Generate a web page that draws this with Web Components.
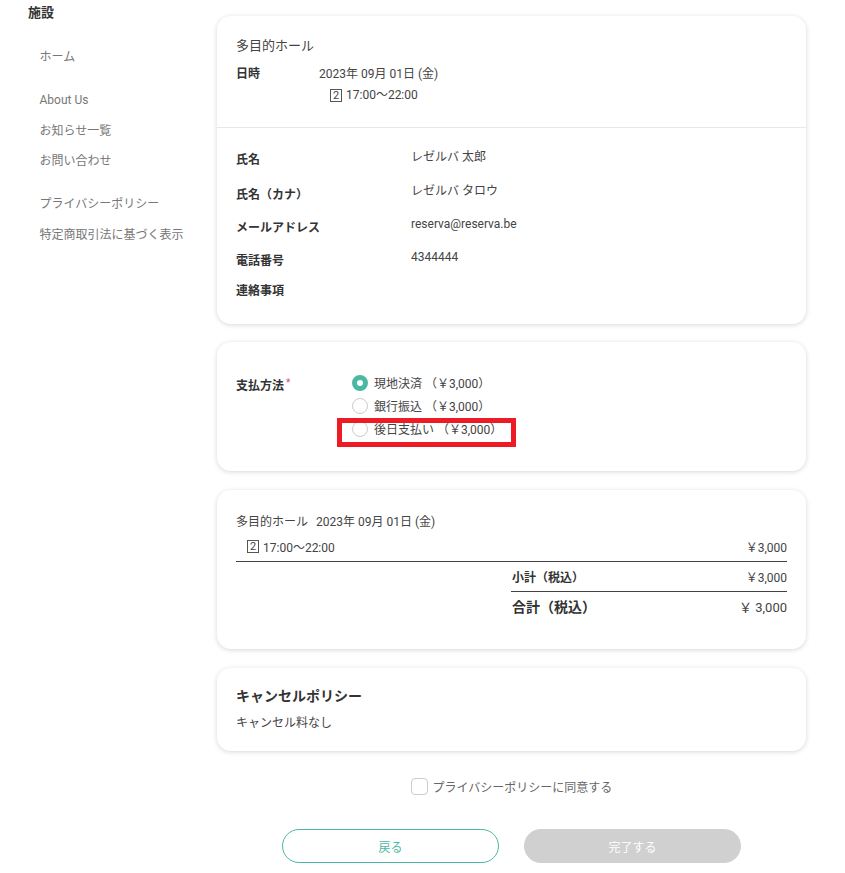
<!DOCTYPE html>
<html lang="ja"><head><meta charset="utf-8">
<style>
html,body{margin:0;padding:0;background:#fff;height:873px;overflow:hidden}
body{font-family:Roboto,"Noto Sans CJK JP",sans-serif;color:#333;font-size:12px}
</style></head><body>
<app-page>
 <side-nav slot="nav"></side-nav>
 <card-box>
  <div style="padding:21px 19px 23px">
   <div style="font-size:13px;line-height:18px;color:#444">多目的ホール</div>
   <info-row label="日時" w="83" vm="0" style="margin-top:10px">2023年 09月 01日 (金)</info-row>
   <div style="margin:3px 0 0 94px;line-height:18px;color:#444;display:flex;align-items:center"><box-num>2</box-num>17:00～22:00</div>
  </div>
  <div style="border-top:1px solid #e8e8e8;padding:21px 19px 24px">
   <info-row label="氏名" w="175" vm="-1">レゼルバ 太郎</info-row>
   <info-row label="氏名（カナ）" w="175" style="margin-top:15px">レゼルバ タロウ</info-row>
   <info-row label="メールアドレス" w="175" style="margin-top:13px">reserva@reserva.be</info-row>
   <info-row label="電話番号" w="175" style="margin-top:13px">4344444</info-row>
   <info-row label="連絡事項" w="175" style="margin-top:10px"></info-row>
  </div>
 </card-box>
 <card-box style="margin-top:18px;height:129px">
  <pay-form></pay-form>
 </card-box>
 <card-box style="margin-top:19px;height:159px">
  <order-summary></order-summary>
 </card-box>
 <card-box style="margin-top:19px;height:83px">
  <div style="padding:18px 19px 0">
   <div style="font-size:14px;font-weight:700;line-height:20px;color:#333">キャンセルポリシー</div>
   <div style="font-size:12px;line-height:18px;margin-top:8px;color:#444">キャンセル料なし</div>
  </div>
 </card-box>
 <agree-row></agree-row>
 <action-bar></action-bar>
</app-page>
<script>
function def(n,html){customElements.define(n,class extends HTMLElement{connectedCallback(){if(this.shadowRoot)return;const r=this.attachShadow({mode:'open'});r.innerHTML=typeof html==='function'?html(this):html;}});}
def('app-page',`<style>:host{display:flex;width:845px;height:873px;box-sizing:border-box}
.nav{width:217px;flex:none}.main{width:589px;flex:none;padding-top:16px;box-sizing:border-box}</style>
<div class="nav"><slot name="nav"></slot></div><div class="main"><slot></slot></div>`);
def('side-nav',`<style>:host{display:block;padding:4px 0 0 28px;font-size:12px;color:#777}
.h{font-size:13px;font-weight:700;color:#333;line-height:18px}
ul{list-style:none;margin:0;padding:0 0 0 11.5px}li{line-height:18px}</style>
<div class="h">施設</div>
<ul style="margin-top:26px"><li>ホーム</li></ul>
<ul style="margin-top:25px"><li>About Us</li><li style="margin-top:13px">お知らせ一覧</li><li style="margin-top:12px">お問い合わせ</li></ul>
<ul style="margin-top:25px"><li>プライバシーポリシー</li><li style="margin-top:13px">特定商取引法に基づく表示</li></ul>`);
def('card-box',`<style>:host{display:block;box-sizing:border-box;background:#fff;border-radius:14px;box-shadow:0 1px 5px rgba(0,0,0,.16);position:relative}</style><slot></slot>`);
def('box-num',`<style>:host{display:inline-flex;box-sizing:border-box;width:12px;height:13px;border:1px solid #555;align-items:center;justify-content:center;font-size:11px;line-height:1;color:#444;margin-right:4px}</style><slot></slot>`);
def('info-row',h=>{const vm=h.getAttribute('vm')??'-2';return `<style>:host{display:flex;line-height:18px;align-items:flex-start}
.l{width:${h.getAttribute('w')}px;flex:none;font-weight:700;color:#333;${h.getAttribute('w')==='175'?'padding-top:2px':''}}
.v{color:#444;margin-top:${vm}px}</style>
<div class="l">${h.getAttribute('label')}</div><div class="v"><slot></slot></div>`});
def('radio-opt',h=>`<style>:host{display:flex;align-items:center;height:23px;color:#444;font-size:12px}
.r{width:16px;height:16px;box-sizing:border-box;border-radius:50%;border:1px solid #ccc;background:#fff;margin-right:6px;flex:none}
.r.on{border:5px solid #4bb8a4;background:#fff}</style>
<span class="r ${h.hasAttribute('checked')?'on':''}"></span><span><slot></slot></span>`);
def('pay-form',`<style>:host{display:flex;padding:29px 0 0 19px;position:relative;height:100%;box-sizing:border-box}
.l{width:116px;flex:none;font-weight:700;line-height:18px;margin-top:6px;color:#333}
sup{color:#e0457b;font-size:10px;font-weight:400;line-height:0;vertical-align:4px;margin-left:2px}
.mark{position:absolute;left:120px;top:76px;width:179px;height:29px;box-sizing:border-box;border:5px solid #ed1c24}</style>
<div class="l">支払方法<sup>*</sup></div>
<div><radio-opt checked>現地決済 （￥3,000）</radio-opt><radio-opt>銀行振込 （￥3,000）</radio-opt><radio-opt>後日支払い （￥3,000）</radio-opt></div>
<div class="mark"></div>`);
def('order-summary',`<style>:host{display:block;padding:23px 19px 0;color:#444;font-size:12px}
.t{line-height:18px;display:flex}.t span{margin-left:8px}
.a{padding-left:11px;display:flex;align-items:center;height:29px;justify-content:space-between;border-bottom:1px solid #444;margin-top:1px}
.a>span:first-child{display:flex;align-items:center}
.sum{margin-left:275px}.b{font-weight:700;color:#333}
.s{border-bottom:1px solid #444;height:29px;display:flex;justify-content:space-between;align-items:center;padding-left:1px}
.g{height:30px;display:flex;justify-content:space-between;align-items:center;padding-left:1px;font-size:13px;margin-top:-1px}
.g .b{font-size:14px}</style>
<div class="t">多目的ホール<span>2023年 09月 01日 (金)</span></div>
<div class="a"><span><box-num>2</box-num>17:00～22:00</span><span>￥3,000</span></div>
<div class="sum"><div class="s"><span class="b">小計（税込）</span><span>￥3,000</span></div>
<div class="g"><span class="b">合計（税込）</span><span>￥ 3,000</span></div></div>`);
def('agree-row',`<style>:host{display:flex;justify-content:center;align-items:center;height:18px;margin-top:26px;color:#666;font-size:12px}
.c{width:17px;height:17px;box-sizing:border-box;border:1px solid #ccc;border-radius:4px;background:#fff;margin-right:5px}</style>
<span class="c"></span><span>プライバシーポリシーに同意する</span>`);
def('action-bar',`<style>:host{display:flex;justify-content:center;gap:25px;margin-top:34px}
.b{width:217px;height:34px;box-sizing:border-box;border-radius:17px;display:flex;align-items:center;justify-content:center;font-size:12px}
.o{border:1px solid #4bb8a4;color:#4bb8a4;background:#fff}.d{background:#d0d0d0;color:#fff}</style>
<div class="b o">戻る</div><div class="b d">完了する</div>`);
</script>
</body></html>
